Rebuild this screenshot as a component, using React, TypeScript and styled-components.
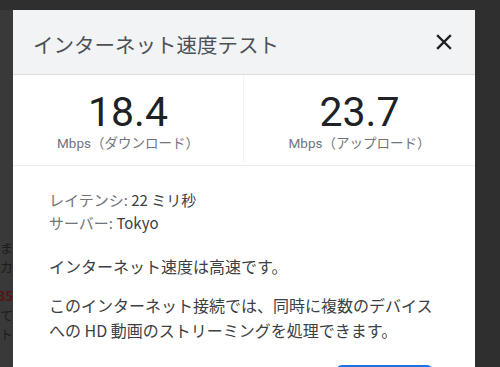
import React, { FC } from "react";
import styled, { createGlobalStyle } from "styled-components";

const GlobalStyle = createGlobalStyle`
  html, body {
    margin: 0;
    padding: 0;
    background: #2f2f2f;
    overflow: hidden;
  }
  body {
    font-family: Roboto, "Noto Sans CJK JP", sans-serif;
  }
`;

const Page = styled.div`
  display: flex;
  flex-direction: column;
  width: 500px;
  height: 367px;
  overflow: hidden;
`;

const TopStrip = styled.div`
  height: 10px;
  flex: 0 0 auto;
`;

const Row = styled.div`
  display: flex;
  flex: 1 1 auto;
`;

const SideStrip = styled.div`
  width: 13px;
  flex: 0 0 auto;
  background: #393939;
  overflow: hidden;
  padding-top: 228px;
  box-sizing: border-box;
  display: flex;
  flex-direction: column;
  align-items: flex-end;
  font-family: "Noto Sans CJK JP", sans-serif;
  font-size: 13px;
  line-height: 19px;
  white-space: nowrap;
`;

const SideLine = styled.div<{ $red?: boolean; $gap?: number }>`
  color: ${(p) => (p.$red ? "#5a1414" : "#1c1c1c")};
  margin-top: ${(p) => p.$gap ?? 0}px;
  font-weight: ${(p) => (p.$red ? 700 : 400)};
`;

const Dialog = styled.div`
  width: 462px;
  background: #fff;
  display: flex;
  flex-direction: column;
`;

const Header = styled.div`
  height: 65px;
  background: #f1f3f4;
  border-bottom: 1px solid #dadce0;
  display: flex;
  align-items: center;
  justify-content: space-between;
  padding: 0 22px 0 20px;
  box-sizing: border-box;
`;

const Title = styled.div`
  font-family: "Noto Sans CJK JP", sans-serif;
  font-size: 20.5px;
  color: #4d5156;
  padding-top: 4px;
`;

const CloseButton = styled.button`
  border: none;
  background: none;
  padding: 0;
  width: 18px;
  height: 18px;
  display: flex;
  align-items: center;
  justify-content: center;
  cursor: pointer;
`;

const Stats = styled.div`
  display: grid;
  grid-template-columns: 1fr 1fr;
  height: 90px;
  border-bottom: 1px solid #ebebeb;
`;

const StatCell = styled.div<{ $divider?: boolean }>`
  display: flex;
  flex-direction: column;
  align-items: center;
  padding-top: 14px;
  border-right: ${(p) => (p.$divider ? "1px solid #f2f2f2" : "none")};
  margin-bottom: 3px;
`;

const Value = styled.div`
  font-family: Roboto, sans-serif;
  font-size: 41px;
  line-height: 46px;
  color: #202124;
`;

const Unit = styled.div`
  font-family: Roboto, "Noto Sans CJK JP", sans-serif;
  font-size: 13.5px;
  color: #70757a;
  margin-top: -3px;
`;

const Body = styled.div`
  padding: 22px 36px 0 36px;
  font-family: "Noto Sans CJK JP", sans-serif;
  color: #3c4043;
`;

const Details = styled.div`
  font-size: 15px;
  line-height: 23px;
`;

const Label = styled.span`
  color: #70757a;
`;

const Paragraph = styled.p<{ $top: number }>`
  margin: ${(p) => p.$top}px 0 0 0;
  font-size: 16px;
  line-height: 25px;
  color: #3c4043;
`;

const Actions = styled.div`
  display: flex;
  justify-content: flex-end;
  margin-top: 22px;
  padding-right: 6px;
`;

const DoneButton = styled.div`
  width: 97px;
  height: 36px;
  border-radius: 6px;
  background: #1a73e8;
`;

const Stat: FC<{ value: string; unit: string; divider?: boolean }> = ({ value, unit, divider }) => (
  <StatCell $divider={divider}>
    <Value>{value}</Value>
    <Unit>{unit}</Unit>
  </StatCell>
);

export default function App() {
  return (
    <Page>
      <GlobalStyle />
      <TopStrip />
      <Row>
        <SideStrip>
          <SideLine>すま</SideLine>
          <SideLine>ッカ</SideLine>
          <SideLine $red $gap={10}>35</SideLine>
          <SideLine>って</SideLine>
          <SideLine>スト</SideLine>
        </SideStrip>
        <Dialog>
          <Header>
            <Title>インターネット速度テスト</Title>
            <CloseButton aria-label="閉じる">
              <svg width="16" height="16" viewBox="0 0 16 16">
                <path d="M2 2 L14 14 M14 2 L2 14" stroke="#202124" strokeWidth="2.4" strokeLinecap="square" />
              </svg>
            </CloseButton>
          </Header>
          <Stats>
            <Stat value="18.4" unit="Mbps（ダウンロード）" divider />
            <Stat value="23.7" unit="Mbps（アップロード）" />
          </Stats>
          <Body>
            <Details>
              <div>
                <Label>レイテンシ:</Label> 22 ミリ秒
              </div>
              <div>
                <Label>サーバー:</Label> Tokyo
              </div>
            </Details>
            <Paragraph $top={20}>インターネット速度は高速です。</Paragraph>
            <Paragraph $top={14}>
              このインターネット接続では、同時に複数のデバイスへの HD 動画のストリーミングを処理できます。
            </Paragraph>
            <Actions>
              <DoneButton />
            </Actions>
          </Body>
        </Dialog>
      </Row>
    </Page>
  );
}
